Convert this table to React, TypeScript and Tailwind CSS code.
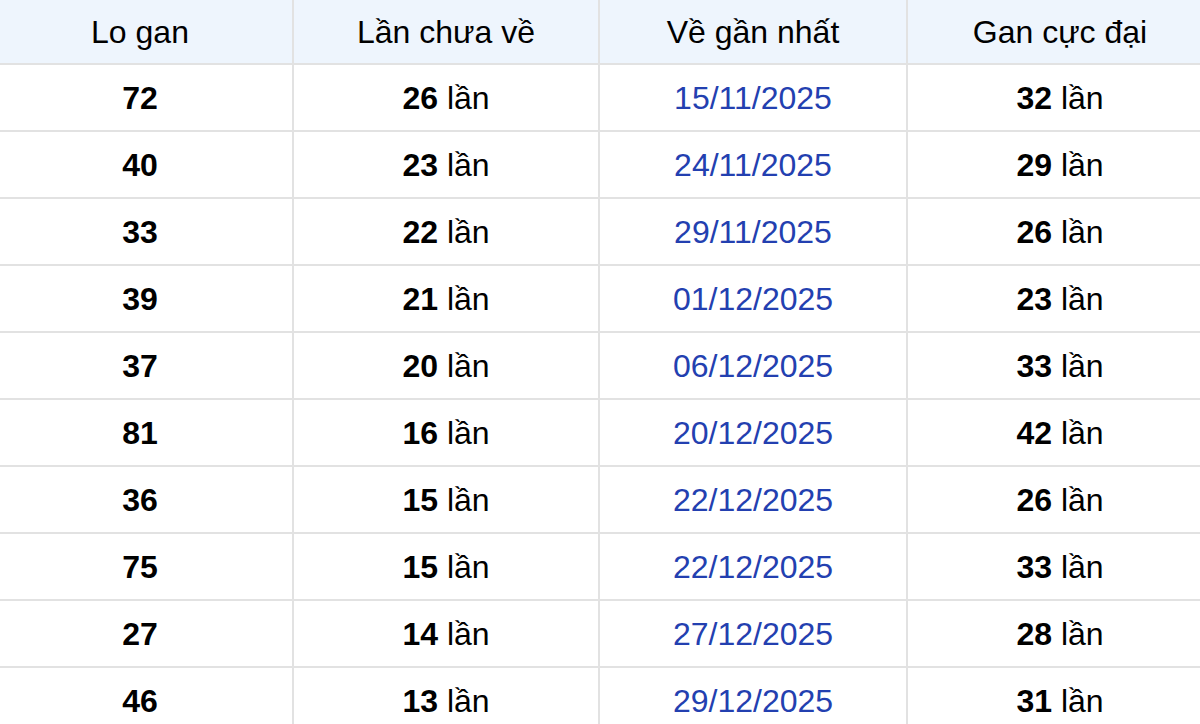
const rows = [
  { lo: '72', chua: 26, date: '15/11/2025', max: 32 },
  { lo: '40', chua: 23, date: '24/11/2025', max: 29 },
  { lo: '33', chua: 22, date: '29/11/2025', max: 26 },
  { lo: '39', chua: 21, date: '01/12/2025', max: 23 },
  { lo: '37', chua: 20, date: '06/12/2025', max: 33 },
  { lo: '81', chua: 16, date: '20/12/2025', max: 42 },
  { lo: '36', chua: 15, date: '22/12/2025', max: 26 },
  { lo: '75', chua: 15, date: '22/12/2025', max: 33 },
  { lo: '27', chua: 14, date: '27/12/2025', max: 28 },
  { lo: '46', chua: 13, date: '29/12/2025', max: 31 },
]

const cell = 'border-[2px] border-[#e2e2e2] text-center align-middle p-0'

export default function App() {
  return (
    <div className="w-[1200px] h-[724px] overflow-hidden bg-white">
      <table
        className="ml-[-14px] w-[1226px] border-collapse table-fixed text-[32px] text-black"
        style={{ fontFamily: '"Liberation Sans", Arial, sans-serif' }}
      >
        <colgroup>
          <col className="w-[306px]" />
          <col className="w-[306px]" />
          <col className="w-[308px]" />
          <col className="w-[306px]" />
        </colgroup>
        <thead>
          <tr className="h-[64px] bg-[#eef5fd]">
            <th className={`${cell} font-normal border-t-0`}>Lo gan</th>
            <th className={`${cell} font-normal border-t-0`}>Lần chưa về</th>
            <th className={`${cell} font-normal border-t-0`}>Về gần nhất</th>
            <th className={`${cell} font-normal border-t-0`}>Gan cực đại</th>
          </tr>
        </thead>
        <tbody>
          {rows.map((r, i) => (
            <tr key={i} className="h-[67px]">
              <td className={`${cell} font-bold`}>{r.lo}</td>
              <td className={cell}>
                <b>{r.chua}</b> lần
              </td>
              <td className={`${cell} text-[#2340b0]`}>{r.date}</td>
              <td className={cell}>
                <b>{r.max}</b> lần
              </td>
            </tr>
          ))}
        </tbody>
      </table>
    </div>
  )
}
